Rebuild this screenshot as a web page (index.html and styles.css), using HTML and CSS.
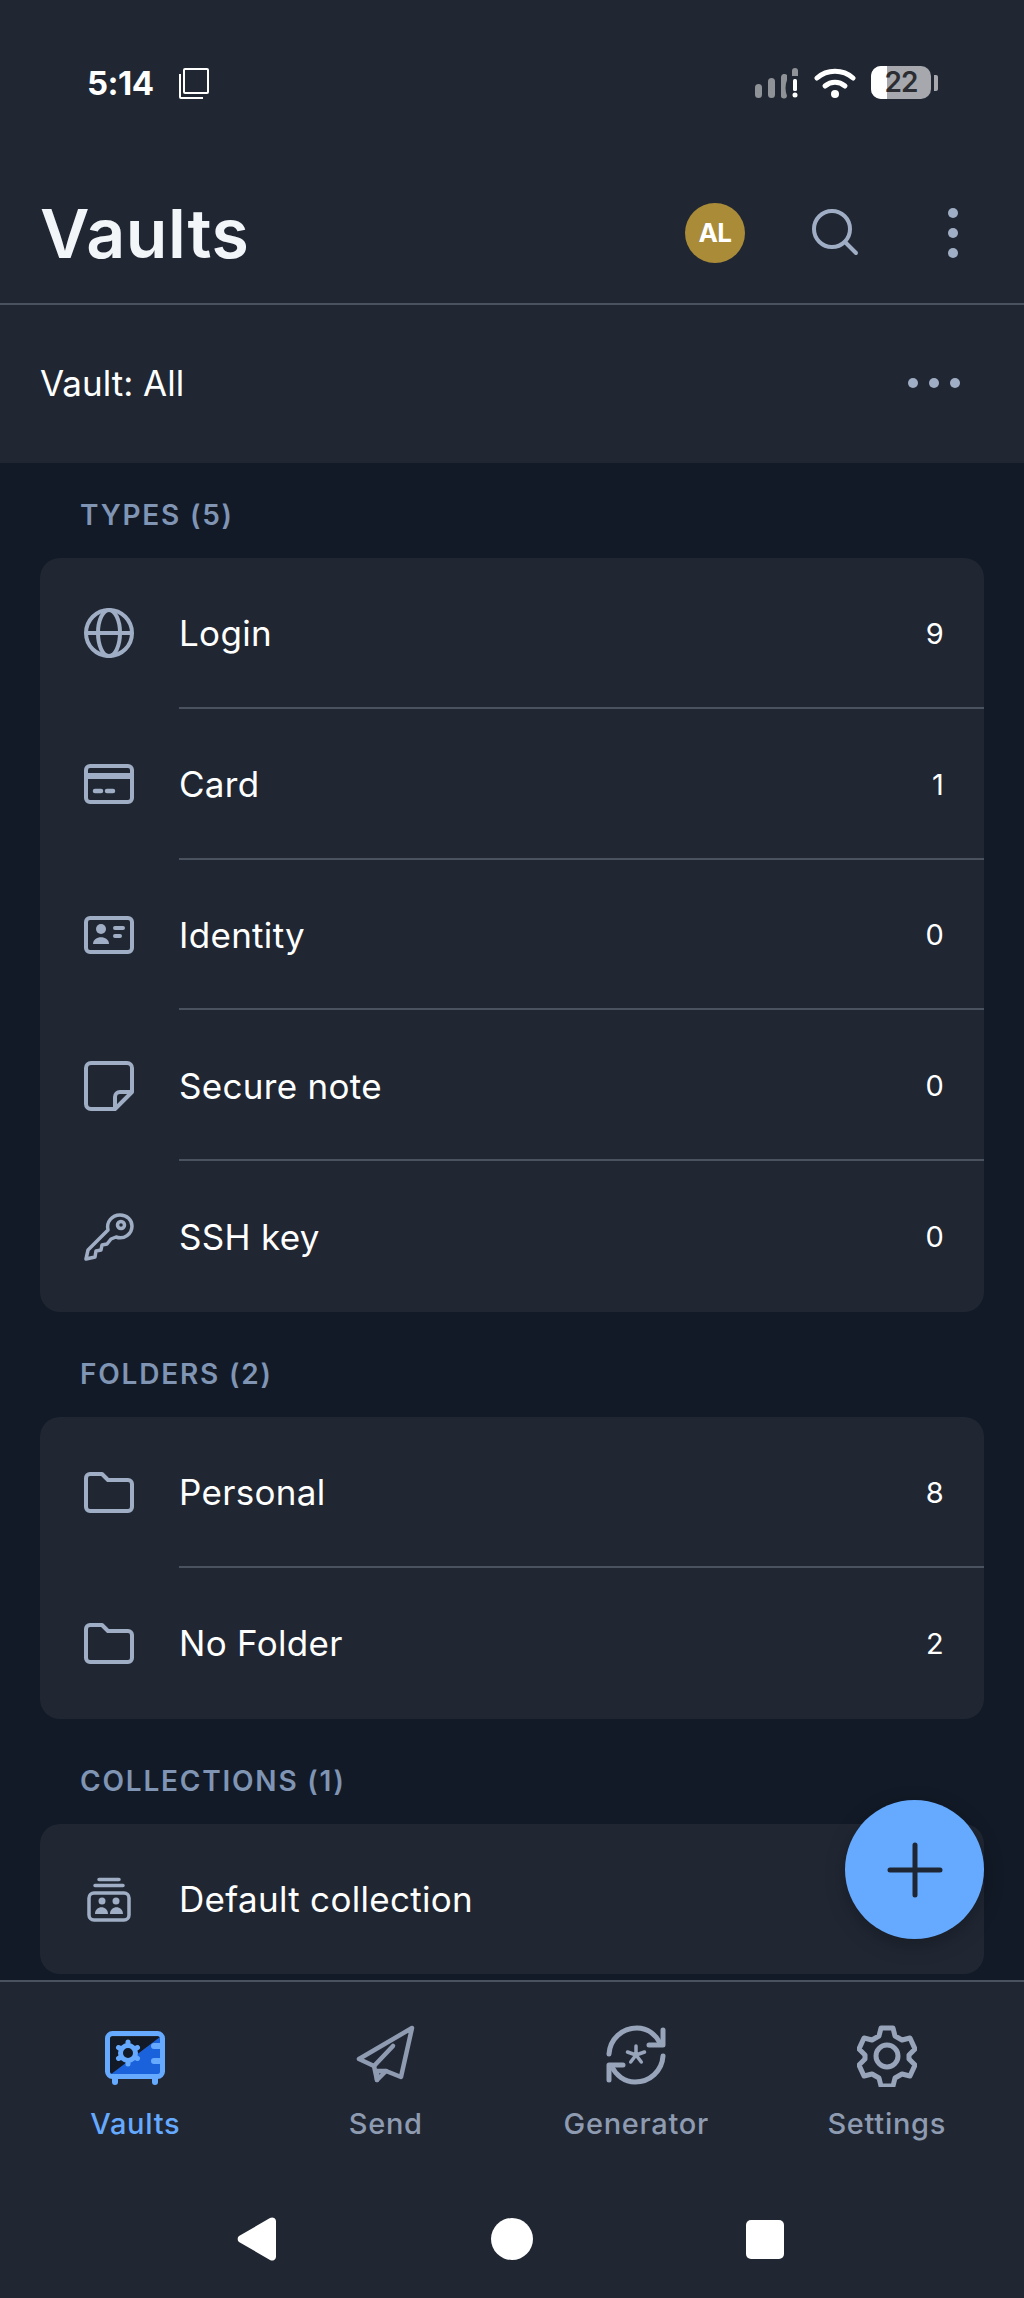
FILE: index.html
```html
<!DOCTYPE html>
<html lang="en">
<head>
  <meta charset="UTF-8" />
  <meta name="viewport" content="width=device-width, initial-scale=1.0" />
  <title>Vaults</title>
  <link rel="stylesheet" href="styles.css">
</head>
<body>
  <div class="app">
    <header class="top">
      <div class="status-bar">
        <div class="status-left">
          <span class="clock">5:14</span>
          <svg class="status-copy" width="32" height="33" viewBox="0 0 32 33" fill="none" stroke="#fff" stroke-width="2"><rect x="6" y="2" width="24" height="24" rx="1"/><path d="M2 7v23a1 1 0 0 0 1 1h22"/></svg>
        </div>
        <div class="status-right">
          <svg width="44" height="32" viewBox="0 0 44 32"><g fill="#8f9398"><rect x="0" y="17" width="7" height="14" rx="3.500"/><rect x="13" y="11" width="7" height="20" rx="3.500"/><path d="M26 10a3.500 3.500 0 0 1 6-2v5c-2 5-2 11 0 16a3 3 0 0 1-6-1z"/><path d="M37 4a3 3 0 0 1 6 0v5h-6z"/></g><g fill="#fff"><rect x="38" y="12" width="4" height="12" rx="1.500"/><circle cx="40" cy="28" r="2.500"/></g></svg>
          <svg width="42" height="32" viewBox="0 0 42 32" fill="none" stroke="#fff" stroke-linecap="round"><path d="M3 11c10-9 26-9 36 0" stroke-width="5"/><path d="M11 19c6-5 14-5 20 0" stroke-width="5"/><circle cx="21" cy="27" r="4" fill="#fff" stroke="none"/></svg>
          <div class="battery"><div class="battery-body"><span class="battery-fill"></span><span class="battery-level">22</span></div><span class="battery-tip"></span></div>
        </div>
      </div>
      <div class="title-bar">
        <h1>Vaults</h1>
        <div class="title-actions">
          <div class="avatar">AL</div>
          <svg class="search-icon" width="50" height="50" viewBox="0 0 50 50" fill="none" stroke="#a0aec5" stroke-width="4" stroke-linecap="round"><circle cx="22" cy="21" r="18"/><path d="M35 34l11 11"/></svg>
          <svg class="kebab-icon" width="10" height="50" viewBox="0 0 10 50" fill="#a0aec5"><circle cx="5" cy="5" r="5"/><circle cx="5" cy="25" r="5"/><circle cx="5" cy="45" r="5"/></svg>
        </div>
      </div>
    </header>

    <div class="vault-filter">
      <span>Vault: All</span>
      <svg width="52" height="10" viewBox="0 0 52 10" fill="#a0aec5"><circle cx="5" cy="5" r="5"/><circle cx="26" cy="5" r="5"/><circle cx="47" cy="5" r="5"/></svg>
    </div>

    <main class="content">
      <h2 class="section-label">TYPES (5)</h2>
      <section class="card">
        <div class="row">
          <svg class="row-icon" viewBox="0 0 50 50" fill="none" stroke="#a0aec5" stroke-width="4"><circle cx="25" cy="25" r="23"/><ellipse cx="25" cy="25" rx="11" ry="23"/><path d="M2 25h46"/></svg>
          <span class="row-name">Login</span><span class="row-count">9</span>
        </div>
        <div class="row">
          <svg class="row-icon" viewBox="0 0 50 50" fill="none" stroke="#a0aec5" stroke-width="4"><rect x="2" y="7" width="46" height="36" rx="4"/><path d="M2 17h46" stroke-width="6"/><path d="M11 32h6M23 32h6" stroke-width="4.500" stroke-linecap="round"/></svg>
          <span class="row-name">Card</span><span class="row-count">1</span>
        </div>
        <div class="row">
          <svg class="row-icon" viewBox="0 0 50 50" fill="none" stroke="#a0aec5" stroke-width="4"><rect x="2" y="8" width="46" height="34" rx="4"/><circle cx="17" cy="19" r="5" fill="#a0aec5" stroke="none"/><path d="M9 34c0-9 16-9 16 0z" fill="#a0aec5" stroke="none"/><path d="M31 18h8M31 26h5" stroke-linecap="round"/></svg>
          <span class="row-name">Identity</span><span class="row-count">0</span>
        </div>
        <div class="row">
          <svg class="row-icon" viewBox="0 0 50 50" fill="none" stroke="#a0aec5" stroke-width="4" stroke-linejoin="round"><path d="M7 2h36a5 5 0 0 1 5 5v24L31 48H7a5 5 0 0 1-5-5V7a5 5 0 0 1 5-5z"/><path d="M48 31H36a5 5 0 0 0-5 5v12"/></svg>
          <span class="row-name">Secure note</span><span class="row-count">0</span>
        </div>
        <div class="row">
          <svg class="row-icon" viewBox="0 0 50 50" fill="none" stroke="#a0aec5" stroke-width="3.500" stroke-linejoin="round"><path d="M2 47l2-9 20-20c-2-8 4-15 12-15 7 0 12 5 12 11 0 8-8 14-16 11l-5 2-4 5-5 1-1 5-5 1-1 6z"/><circle cx="37" cy="13" r="3.500"/></svg>
          <span class="row-name">SSH key</span><span class="row-count">0</span>
        </div>
      </section>

      <h2 class="section-label">FOLDERS (2)</h2>
      <section class="card">
        <div class="row">
          <svg class="row-icon" viewBox="0 0 50 50" fill="none" stroke="#a0aec5" stroke-width="4" stroke-linejoin="round"><path d="M2 11a4 4 0 0 1 4-4h12l6 6h20a4 4 0 0 1 4 4v23a4 4 0 0 1-4 4H6a4 4 0 0 1-4-4z"/></svg>
          <span class="row-name">Personal</span><span class="row-count">8</span>
        </div>
        <div class="row">
          <svg class="row-icon" viewBox="0 0 50 50" fill="none" stroke="#a0aec5" stroke-width="4" stroke-linejoin="round"><path d="M2 11a4 4 0 0 1 4-4h12l6 6h20a4 4 0 0 1 4 4v23a4 4 0 0 1-4 4H6a4 4 0 0 1-4-4z"/></svg>
          <span class="row-name">No Folder</span><span class="row-count">2</span>
        </div>
      </section>

      <h2 class="section-label">COLLECTIONS (1)</h2>
      <section class="card">
        <div class="row">
          <svg class="row-icon" viewBox="0 0 50 50" fill="none" stroke="#a0aec5" stroke-width="3.500" stroke-linecap="round"><path d="M15 5.500h20M11 11.500h28"/><rect x="5" y="19" width="40" height="27" rx="5"/><g fill="#a0aec5" stroke="none"><circle cx="18" cy="27" r="3.500"/><circle cx="32" cy="27" r="3.500"/><path d="M11 40c0-9 13-9 13 0zM26 40c0-9 13-9 13 0z"/></g></svg>
          <span class="row-name">Default collection</span>
        </div>
      </section>
    </main>

    <button class="fab" aria-label="Add item">
      <svg width="56" height="56" viewBox="0 0 56 56" stroke="#1f2633" stroke-width="5" stroke-linecap="round"><path d="M28 3v50M3 28h50"/></svg>
    </button>

    <nav class="tabs">
      <div class="tab active">
        <svg width="60" height="54" viewBox="0 0 60 54"><path d="M5 44V6h50z" fill="#121a27"/><path d="M5 44L55 6v38z" fill="#1a62dc"/><rect x="2.500" y="2.500" width="55" height="43" rx="5" fill="none" stroke="#66aaff" stroke-width="5"/><path d="M10 46v5M50 46v5" stroke="#66aaff" stroke-width="6" stroke-linecap="round"/><path d="M49 15h8M49 30h8" stroke="#66aaff" stroke-width="6" stroke-linecap="round"/><g stroke="#66aaff" stroke-width="5" stroke-linecap="round"><path d="M23 11v22M13.500 16.500l19 11M13.500 27.500l19-11"/></g><circle cx="23" cy="22" r="7.500" fill="#121a27" stroke="#66aaff" stroke-width="5"/></svg>
        <span>Vaults</span>
      </div>
      <div class="tab">
        <svg width="60" height="60" viewBox="0 0 60 60" fill="none" stroke="#8e9bb1" stroke-width="4.500" stroke-linejoin="round" stroke-linecap="round"><path d="M56 3L3 34l15 7 3 14 9-9 15 6z"/><path d="M18 41l19-20M21 55v-9l9 0"/></svg>
        <span>Send</span>
      </div>
      <div class="tab">
        <svg width="60" height="60" viewBox="0 0 60 60" fill="none" stroke="#97a4ba" stroke-width="5" stroke-linecap="round" stroke-linejoin="round"><path d="M3 29C4 14 16 3 31 3c11 0 19 7 23 15"/><path d="M57 5v15H43"/><path d="M57 31c-1 15-13 26-28 26-11 0-19-7-23-15"/><path d="M3 55V40h14"/><path d="M30 30v-9M30 30l8.500-3M30 30l5.300 7M30 30l-5.300 7M30 30l-8.500-3" stroke-width="3.500"/></svg>
        <span>Generator</span>
      </div>
      <div class="tab">
        <svg width="60" height="62" viewBox="0 0 60 62" fill="none" stroke="#97a4ba" stroke-width="5" stroke-linejoin="round"><path d="M24 3h12l2 8 7 4 8-2 5 11-6 6v4l6 6-5 11-8-2-7 4-2 8H24l-2-8-7-4-8 2-5-11 6-6v-4l-6-6 5-11 8 2 7-4z"/><circle cx="30" cy="31" r="11"/></svg>
        <span>Settings</span>
      </div>
    </nav>

    <div class="system-nav">
      <svg width="40" height="44" viewBox="0 0 40 44" fill="#fff"><path d="M33 1a4 4 0 0 1 6 4v34a4 4 0 0 1-6 4L2 25a4 4 0 0 1 0-6z"/></svg>
      <span class="sys-home"></span>
      <span class="sys-recent"></span>
    </div>
  </div>
</body>
</html>
```

FILE: styles.css
```css
* {
  box-sizing: border-box;
}

body {
  margin: 0;
  padding: 0;
  background: #202733;
  font-family: Inter, "Liberation Sans", sans-serif;
  color: #fff;
}

.app {
  position: relative;
  width: 1024px;
  height: 2298px;
  display: flex;
  flex-direction: column;
  overflow: hidden;
}

.top {
  height: 305px;
  border-bottom: 2px solid #4a515f;
  flex-shrink: 0;
}

.status-bar {
  height: 166px;
  padding: 66px 86px 0 87px;
  display: flex;
  justify-content: space-between;
  align-items: flex-start;
}

.status-left {
  display: flex;
  align-items: center;
  gap: 24px;
}

.clock {
  font-size: 33px;
  font-weight: 700;
  line-height: 34px;
  letter-spacing: -0.5px;
}

.status-right {
  display: flex;
  align-items: center;
  gap: 15px;
}

.battery {
  display: flex;
  align-items: center;
  gap: 3px;
}

.battery-body {
  position: relative;
  width: 60px;
  height: 33px;
  border-radius: 10px;
  background: #a6a8ad;
  overflow: hidden;
  text-align: center;
}

.battery-fill {
  position: absolute;
  left: 0;
  top: 0;
  bottom: 0;
  width: 16px;
  background: #fff;
}

.battery-level {
  position: relative;
  font-size: 28px;
  font-weight: 600;
  line-height: 33px;
  color: #2b2d33;
  letter-spacing: -1px;
}

.battery-tip {
  width: 4px;
  height: 16px;
  border-radius: 0 2px 2px 0;
  background: #a6a8ad;
}

.title-bar {
  height: 137px;
  padding: 0 40px 4px 40px;
  display: flex;
  justify-content: space-between;
  align-items: center;
}

.title-bar h1 {
  margin: 0;
  font-size: 68px;
  font-weight: 600;
  line-height: 80px;
  color: #f3f6f9;
  letter-spacing: 0.6px;
}

.title-actions {
  display: flex;
  align-items: center;
}

.avatar {
  width: 60px;
  height: 60px;
  border-radius: 50%;
  background: #a98b38;
  font-size: 26px;
  font-weight: 700;
  line-height: 60px;
  text-align: center;
  letter-spacing: -0.5px;
}

.search-icon {
  margin-left: 65px;
}

.kebab-icon {
  margin-left: 88px;
  margin-right: 26px;
}

.vault-filter {
  height: 158px;
  padding: 0 40px 2px;
  display: flex;
  justify-content: space-between;
  align-items: center;
  font-size: 35px;
  flex-shrink: 0;
}

.vault-filter svg {
  margin-right: 24px;
}

.content {
  flex: 1;
  padding: 0 40px;
  background: #121a27;
  overflow: hidden;
}

.section-label {
  margin: 0;
  height: 95px;
  padding: 35px 40px 0;
  font-size: 28px;
  font-weight: 600;
  line-height: 34px;
  letter-spacing: 1.8px;
  color: #8094b4;
}

.card {
  background: #202733;
  border-radius: 20px;
  margin-bottom: 10px;
}

.row {
  position: relative;
  height: 150.8px;
  padding: 0 40px 0 44px;
  display: flex;
  align-items: center;
  font-size: 35px;
  letter-spacing: 0.3px;
}

.row::after {
  content: "";
  position: absolute;
  left: 139px;
  right: 0;
  bottom: 0;
  height: 2px;
  background: #4a515f;
}

.row:last-child::after {
  display: none;
}

.row-icon {
  width: 50px;
  height: 50px;
  flex-shrink: 0;
}

.row-name {
  margin-left: 45px;
  flex: 1;
}

.row-count {
  font-size: 29px;
}

.fab {
  position: absolute;
  left: 845px;
  top: 1800px;
  width: 139px;
  height: 139px;
  border: none;
  border-radius: 50%;
  background: #66aaff;
  padding: 0;
  display: flex;
  align-items: center;
  justify-content: center;
  box-shadow: 0 6px 20px rgba(0, 0, 0, 0.25);
}

.tabs {
  height: 200px;
  border-top: 2px solid #4a515f;
  padding: 43px 12px 0 10px;
  display: flex;
  flex-shrink: 0;
}

.tab {
  flex: 1;
  display: flex;
  flex-direction: column;
  align-items: center;
  height: 117px;
  justify-content: space-between;
  font-size: 29px;
  font-weight: 500;
  letter-spacing: 0.7px;
  color: #8e9bb1;
}

.tab.active {
  color: #66aaff;
}

.tab.active svg {
  margin-top: 6px;
}

.tab span {
  line-height: 36px;
}

.system-nav {
  height: 118px;
  padding: 0 240px 0 237px;
  display: flex;
  justify-content: space-between;
  align-items: center;
  flex-shrink: 0;
}

.sys-home {
  width: 42px;
  height: 42px;
  border-radius: 50%;
  background: #fff;
}

.sys-recent {
  width: 38px;
  height: 39px;
  border-radius: 5px;
  background: #fff;
}
```
